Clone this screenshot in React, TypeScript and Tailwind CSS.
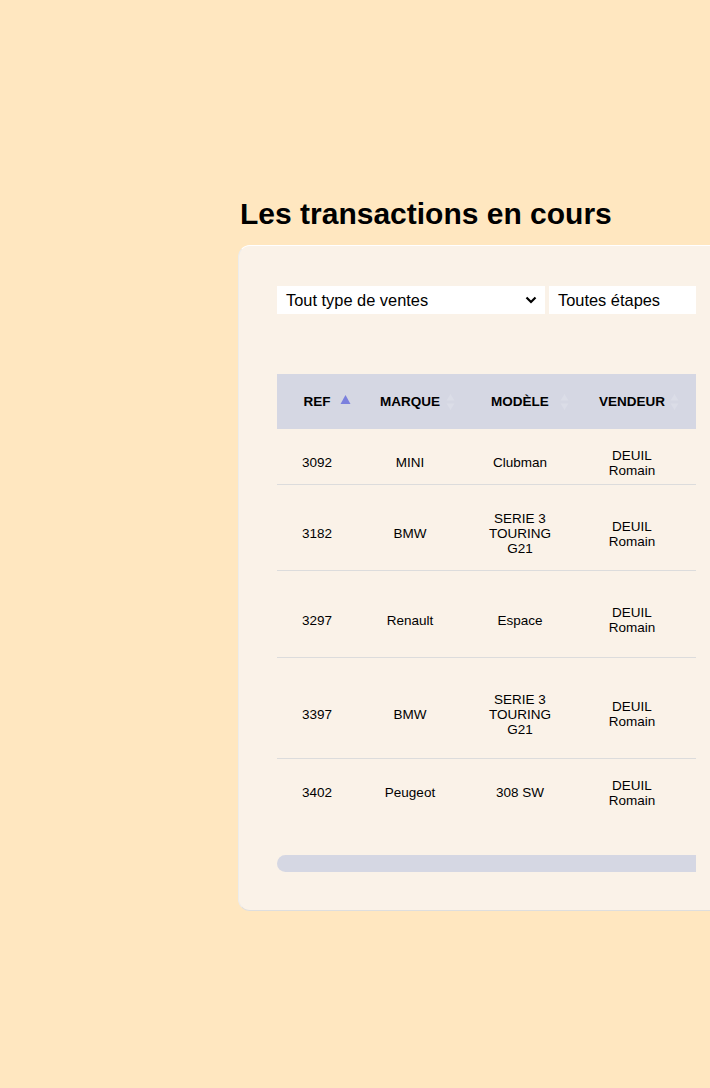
import React from "react";

const cols = [80, 106, 114, 110, 140];

function SortIcon({ active }: { active?: boolean }) {
  if (active) {
    return (
      <svg width="11" height="18" viewBox="0 0 11 18" className="absolute right-[6px] top-1/2 -translate-y-1/2">
        <polygon points="5.5,2 10.5,11 0.5,11" fill="#7b80dd" />
      </svg>
    );
  }
  return (
    <svg width="9" height="18" viewBox="0 0 9 18" className="absolute right-[8px] top-1/2 -translate-y-1/2">
      <polygon points="4.5,1 8.5,7.5 0.5,7.5" fill="#dbdde7" />
      <polygon points="4.5,17 8.5,10.5 0.5,10.5" fill="#dbdde7" />
    </svg>
  );
}

type Row = { ref: string; marque: string; modele: string[]; vendeur: string[]; h: string; last?: boolean };

const rows: Row[] = [
  { ref: "3092", marque: "MINI", modele: ["Clubman"], vendeur: ["DEUIL", "Romain"], h: "h-[56px]" },
  { ref: "3182", marque: "BMW", modele: ["SERIE 3", "TOURING", "G21"], vendeur: ["DEUIL", "Romain"], h: "h-[86px]" },
  { ref: "3297", marque: "Renault", modele: ["Espace"], vendeur: ["DEUIL", "Romain"], h: "h-[87px]" },
  { ref: "3397", marque: "BMW", modele: ["SERIE 3", "TOURING", "G21"], vendeur: ["DEUIL", "Romain"], h: "h-[101px]" },
  { ref: "3402", marque: "Peugeot", modele: ["308 SW"], vendeur: ["DEUIL", "Romain"], h: "h-[55px]", last: true },
];

function Cell({ lines, w }: { lines: string[]; w: number }) {
  return (
    <div className="flex shrink-0 items-center justify-center text-center" style={{ width: w }}>
      <div>
        {lines.map((l, i) => (
          <div key={i}>{l}</div>
        ))}
      </div>
    </div>
  );
}

export default function App() {
  return (
    <div className="min-h-[1088px] w-full overflow-hidden bg-[#ffe7c0] font-['Liberation_Sans',Arial,sans-serif] text-black">
      <div className="pl-[238px] pt-[197px]">
        <h1 className="pl-[2px] text-[30px] font-bold leading-[34px]">Les transactions en cours</h1>
        <div className="mt-[14px] h-[666px] w-[520px] rounded-l-[12px] border-b border-l border-t border-b-[#dedede] border-l-[#ececec] border-t-white bg-[#faf2e8] pl-[38px] pt-[40px]">
          <div className="w-[419px] overflow-hidden">
            <div className="flex gap-[4px]">
              <div className="flex h-[28px] w-[268px] shrink-0 items-center justify-between bg-white pl-[9px] pr-[8px] text-[16.4px]">
                <span>Tout type de ventes</span>
                <svg width="12" height="8" viewBox="0 0 12 8">
                  <polyline points="1.5,1.5 6,6 10.5,1.5" fill="none" stroke="#000" strokeWidth="2.2" />
                </svg>
              </div>
              <div className="flex h-[28px] w-[220px] shrink-0 items-center bg-white pl-[9px] text-[16.4px]">
                <span>Toutes étapes</span>
              </div>
            </div>

            <div className="mt-[60px] text-[13.5px] leading-[15px]">
              <div className="flex h-[55px] w-max bg-[#d5d7e3] text-[13.5px] font-bold uppercase">
                {["REF", "MARQUE", "MODÈLE", "VENDEUR", ""].map((t, i) => (
                  <div key={i} className="relative flex shrink-0 items-center justify-center" style={{ width: cols[i] }}>
                    {t}
                    {t && <SortIcon active={i === 0} />}
                  </div>
                ))}
              </div>
              {rows.map((r) => (
                <div
                  key={r.ref}
                  className={`flex w-max pt-[12px] ${r.h} ${r.last ? "" : "border-b border-[#dcdcdc]"}`}
                >
                  <Cell lines={[r.ref]} w={cols[0]} />
                  <Cell lines={[r.marque]} w={cols[1]} />
                  <Cell lines={r.modele} w={cols[2]} />
                  <Cell lines={r.vendeur} w={cols[3]} />
                  <Cell lines={[""]} w={cols[4]} />
                </div>
              ))}
              <div className="mt-[41px] h-[17px] w-[430px] rounded-l-full bg-[#d5d7e3]" />
            </div>
          </div>
        </div>
      </div>
    </div>
  );
}
